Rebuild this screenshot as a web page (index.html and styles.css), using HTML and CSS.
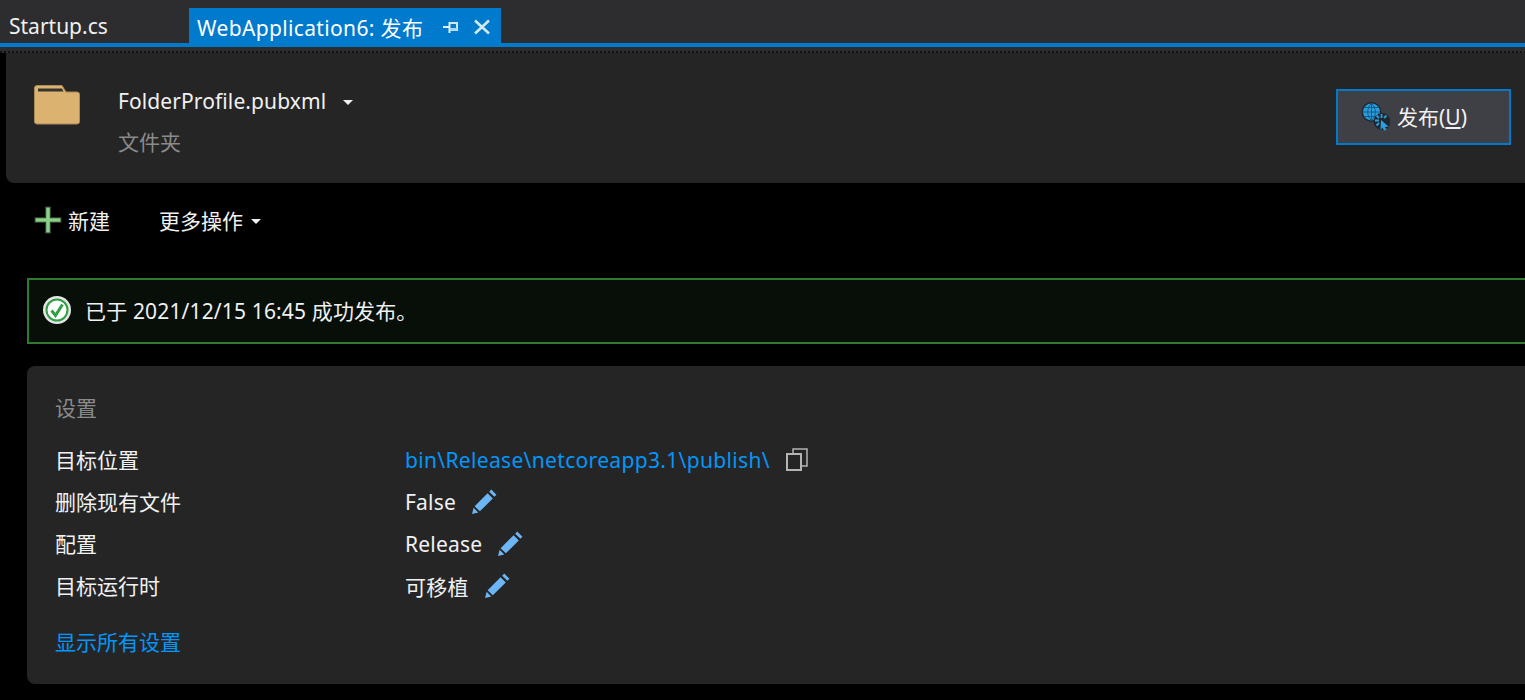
FILE: index.html
```html
<!DOCTYPE html>
<html lang="zh-CN">
<head>
    <meta charset="UTF-8">
    <meta name="viewport" content="width=device-width, initial-scale=1.0">
    <title>WebApplication6: 发布</title>
    <link rel="stylesheet" href="styles.css">
</head>
<body>
    <div class="tab-strip">
        <div class="tab">Startup.cs</div>
        <div class="tab tab-active">
            <span class="tab-title">WebApplication6: 发布</span>
            <svg class="tab-pin" width="16" height="16" viewBox="0 0 16 16">
                <path d="M0 8h6" fill="none" stroke="#e3f1fb" stroke-width="2"/>
                <path d="M6.500 3v11" fill="none" stroke="#e3f1fb" stroke-width="2"/>
                <path d="M7 4h7v7H7" fill="none" stroke="#cfe6f7" stroke-width="2"/>
                <path d="M7 9h7v2.500H7z" fill="#a9d3f0"/>
            </svg>
            <svg class="tab-close" width="18" height="18" viewBox="0 0 18 18">
                <path d="M2 2.500l14 13M16 2.500l-14 13" fill="none" stroke="#d4e9f8" stroke-width="2.600"/>
            </svg>
        </div>
    </div>
    <div class="tab-line"></div>

    <div class="dots-strip"></div>

    <div class="profile-card">
        <svg class="folder-icon" width="46" height="40" viewBox="0 0 46 40">
            <path d="M0.500 3a2.500 2.500 0 0 1 2.500-2.500h25l4 6.500h11a2.500 2.500 0 0 1 2.500 2.500v27a2.500 2.500 0 0 1-2.500 2.500H3a2.500 2.500 0 0 1-2.500-2.500z" fill="#dcb271" stroke="#a98a58"/>
            <path d="M4 3.500h24l1.500 3H4z" fill="#34332f"/>
        </svg>
        <div class="profile-text">
            <div class="profile-name">FolderProfile.pubxml<span class="caret caret-name"></span></div>
            <div class="profile-type">文件夹</div>
        </div>
        <div class="publish-button">
            <svg width="30" height="30" viewBox="0 0 30 30">
                <circle cx="11.500" cy="11" r="10" fill="#20282f"/>
                <circle cx="11.500" cy="11" r="8.500" fill="#2a9ede"/>
                <path d="M3 11h17M11.500 2.500v17M4.500 6.500h14M4.500 15.500h14M11.500 2.500c-5 4-5 13 0 17M11.500 2.500c5 4 5 13 0 17" fill="none" stroke="#15557f" stroke-width="0.900"/>
                <circle cx="22" cy="20.500" r="8.500" fill="#20282f"/>
                <path d="M21 19l7.500 6.500-3.500 .5 1.500 3-2.500 .5-1.500-3-2 2.500z" fill="#2a9ede"/>
                <path d="M21.500 13v4M15 19.500h4M16.500 14.500l2.500 2.500M26.500 14.500l-2.500 2.500M16.500 24.500l2.500-2.500" fill="none" stroke="#2a9ede" stroke-width="1.800"/>
            </svg>
            <span>发布(<u>U</u>)</span>
        </div>
    </div>

    <div class="toolbar">
        <div class="toolbar-item toolbar-new">
            <svg width="28" height="28" viewBox="0 0 28 28">
                <path d="M14 0.500v27M0.500 14h27" fill="none" stroke="#2e3b2e" stroke-width="6"/>
                <path d="M14 1.500v25M1.500 14h25" fill="none" stroke="#89d185" stroke-width="3.600"/>
            </svg>
            <span>新建</span>
        </div>
        <div class="toolbar-item">更多操作<span class="caret caret-more"></span></div>
    </div>

    <div class="success-banner">
        <svg width="30" height="30" viewBox="0 0 30 30">
            <circle cx="15" cy="15" r="14" fill="#e6e6e6"/>
            <circle cx="15" cy="15" r="10.500" fill="#fff" stroke="#2f9e44" stroke-width="2"/>
            <path d="M9.500 15.500l4 5 7-11" fill="none" stroke="#2f9e44" stroke-width="3"/>
        </svg>
        <span class="banner-text">已于 2021/12/15 16:45 成功发布。</span>
    </div>

    <div class="settings-card">
        <div class="settings-title">设置</div>
        <div class="settings-grid">
            <div class="setting-label">目标位置</div>
            <div class="setting-value">
                <span class="link path-link">bin\Release\netcoreapp3.1\publish\</span>
                <svg class="copy-icon" width="24" height="24" viewBox="0 0 24 24">
                    <path d="M8 6V2h14v17h-5" fill="none" stroke="#b4b4b4" stroke-width="1.500"/>
                    <path d="M2 7h14v16H2z" fill="none" stroke="#b4b4b4" stroke-width="2"/>
                </svg>
            </div>

            <div class="setting-label">删除现有文件</div>
            <div class="setting-value">
                <span>False</span>
                <svg class="edit-icon" width="27" height="27" viewBox="0 0 26 26"><path d="M19.500 1.500l5 5-2 2-5-5zM16 5l5 5L8.500 22.500l-5-5zM2.500 19l4.500 4.500L1 25z" fill="#6cb6f5"/></svg>
            </div>

            <div class="setting-label">配置</div>
            <div class="setting-value">
                <span>Release</span>
                <svg class="edit-icon" width="27" height="27" viewBox="0 0 26 26"><path d="M19.500 1.500l5 5-2 2-5-5zM16 5l5 5L8.500 22.500l-5-5zM2.500 19l4.500 4.500L1 25z" fill="#6cb6f5"/></svg>
            </div>

            <div class="setting-label">目标运行时</div>
            <div class="setting-value">
                <span>可移植</span>
                <svg class="edit-icon" width="27" height="27" viewBox="0 0 26 26"><path d="M19.500 1.500l5 5-2 2-5-5zM16 5l5 5L8.500 22.500l-5-5zM2.500 19l4.500 4.500L1 25z" fill="#6cb6f5"/></svg>
            </div>
        </div>
        <div class="link show-all">显示所有设置</div>
    </div>
</body>
</html>
```

FILE: styles.css
```css
html, body {
    height: 700px;
    overflow: hidden;
}
body {
    margin: 0;
    background-color: #000;
    color: #f1f1f1;
    font-family: "Noto Sans", "Noto Sans CJK SC", sans-serif;
    font-size: 21px;
}
.tab-strip {
    display: flex;
    align-items: flex-end;
    height: 43px;
    background-color: #2d2d30;
}
.tab {
    display: flex;
    align-items: center;
    width: 189px;
    height: 35px;
    padding-left: 9px;
    padding-top: 1px;
    white-space: nowrap;
    box-sizing: border-box;
}
.tab-active {
    width: 312px;
    padding-left: 8px;
    padding-top: 2px;
    background-color: #007acc;
    color: #fff;
}
.tab-title {
    width: 246px;
    letter-spacing: 0.35px;
}
.tab-pin {
    margin-right: 14px;
}
.tab-line {
    height: 4px;
    background-color: #007acc;
}
.dots-strip {
    height: 6px;
    background: repeating-linear-gradient(90deg, #111 0 2px, #2d2d30 2px 4px) 0 4px / 100% 2px no-repeat, #2d2d30;
}
.profile-card {
    display: flex;
    align-items: center;
    height: 130px;
    margin-left: 6px;
    box-sizing: border-box;
    background-color: #252526;
    border-bottom-left-radius: 8px;
}
.folder-icon {
    margin: 0 38px 27px 28px;
}
.profile-text {
    flex: 1;
    padding-top: 6px;
}
.profile-name {
    line-height: 28px;
    margin-bottom: 13px;
    letter-spacing: 0.1px;
}
.profile-type {
    line-height: 28px;
    color: #8a8a8a;
}
.caret {
    display: inline-block;
    border-left: 5px solid transparent;
    border-right: 5px solid transparent;
    border-top: 5px solid #f1f1f1;
    vertical-align: middle;
}
.caret-name {
    margin-left: 17px;
}
.caret-more {
    margin-left: 8px;
    margin-top: 2px;
}
.publish-button {
    display: flex;
    align-items: center;
    gap: 7px;
    width: 175px;
    height: 56px;
    margin-right: 14px;
    margin-bottom: 2px;
    padding-left: 22px;
    padding-bottom: 2px;
    box-sizing: border-box;
    background-color: #3f3f46;
    border: 2px solid #007acc;
}
.toolbar {
    display: flex;
    align-items: center;
    height: 76px;
    padding-left: 34px;
    padding-bottom: 2px;
    box-sizing: border-box;
}
.toolbar-item {
    display: flex;
    align-items: center;
}
.toolbar-new {
    gap: 6px;
    width: 125px;
}
.success-banner {
    display: flex;
    align-items: center;
    gap: 13px;
    height: 66px;
    margin: 19px 0 22px 27px;
    padding-left: 13px;
    padding-bottom: 2px;
    box-sizing: border-box;
    background-color: #070f08;
    border: 2px solid #2f7a33;
    border-right: none;
}
.banner-text {
    letter-spacing: 0.15px;
}
.settings-card {
    height: 318px;
    margin-left: 27px;
    padding: 27px 0 0 28px;
    box-sizing: border-box;
    background-color: #252526;
    border-radius: 8px 0 0 8px;
}
.settings-title {
    line-height: 30px;
    color: #8a8a8a;
    margin-bottom: 15px;
}
.settings-grid {
    display: grid;
    grid-template-columns: 350px 1fr;
    grid-auto-rows: 42px;
    align-items: center;
}
.setting-value {
    display: flex;
    align-items: center;
    gap: 15px;
    padding-top: 2px;
    letter-spacing: 0.2px;
}
.copy-icon {
    margin-bottom: 2px;
}
.edit-icon {
    margin-bottom: 2px;
}
.link {
    color: #0097fb;
}
.path-link {
    letter-spacing: 0.33px;
}
.show-all {
    margin-top: 21px;
    line-height: 30px;
}
```
